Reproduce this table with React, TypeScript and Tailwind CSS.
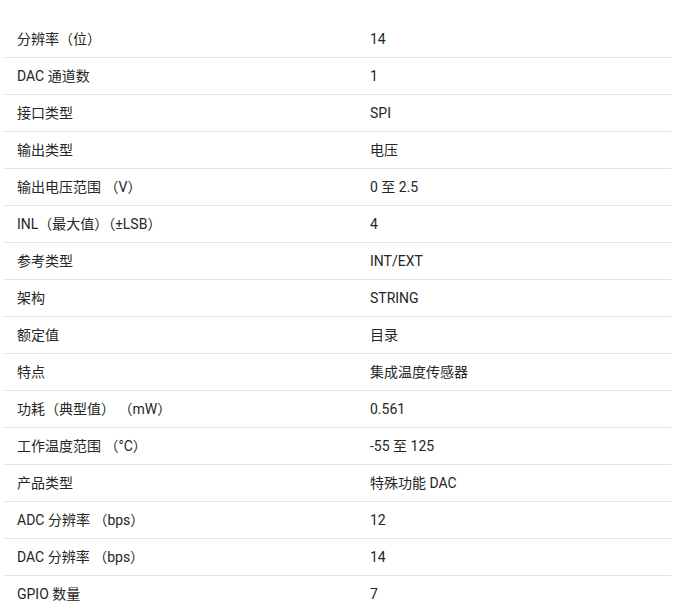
const rows: [string, string][] = [
  ['分辨率（位）', '14'],
  ['DAC 通道数', '1'],
  ['接口类型', 'SPI'],
  ['输出类型', '电压'],
  ['输出电压范围 （V）', '0 至 2.5'],
  ['INL（最大值）（±LSB）', '4'],
  ['参考类型', 'INT/EXT'],
  ['架构', 'STRING'],
  ['额定值', '目录'],
  ['特点', '集成温度传感器'],
  ['功耗（典型值） （mW）', '0.561'],
  ['工作温度范围 （°C）', '-55 至 125'],
  ['产品类型', '特殊功能 DAC'],
  ['ADC 分辨率 （bps）', '12'],
  ['DAC 分辨率 （bps）', '14'],
  ['GPIO 数量', '7'],
]

export default function App() {
  return (
    <div className="bg-white w-[677px] h-[612px] overflow-hidden pt-[21px] pl-[4px] font-['Roboto','Noto_Sans_CJK_SC',sans-serif] text-[14px] text-[#262626]">
      <div className="w-[667px]">
        {rows.map(([k, v], i) => (
          <div key={i} className="grid grid-cols-[353px_1fr] h-[37px] border-b border-[#e4e4e4] items-center">
            <div className="px-[13px] whitespace-pre">{k}</div>
            <div className="px-[13px]">{v}</div>
          </div>
        ))}
      </div>
    </div>
  )
}
